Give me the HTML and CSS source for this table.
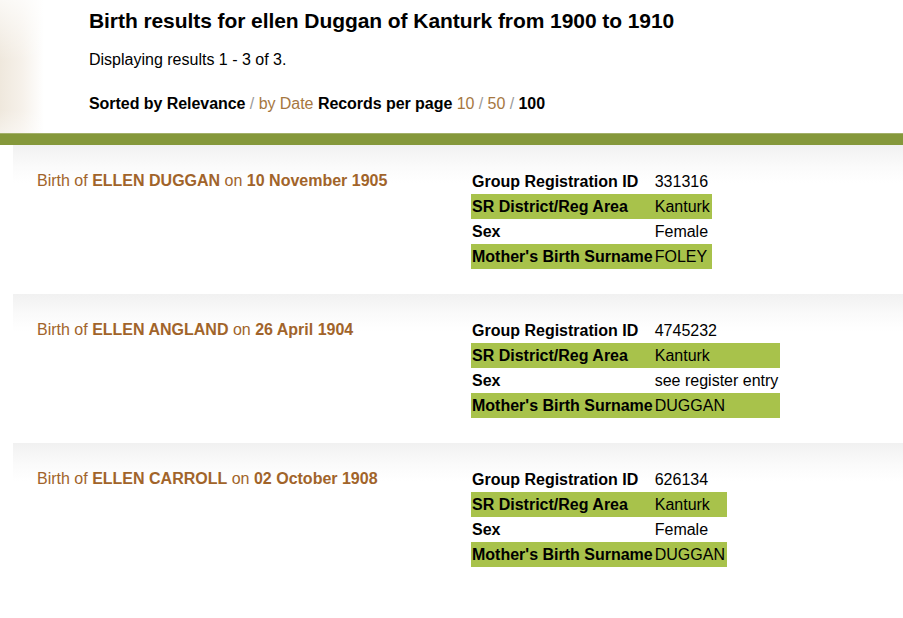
FILE: index.html
```html
<!DOCTYPE html>
<html>
<head>
<meta charset="utf-8">
<link rel="stylesheet" href="styles.css">
</head>
<body>
<div class="header">
  <h1 class="title">Birth results for ellen Duggan of Kanturk from 1900 to 1910</h1>
  <p class="count">Displaying results 1 - 3 of 3.</p>
  <p class="sort"><b>Sorted by Relevance</b> <span class="sep">/</span> <a class="lnk">by Date</a> <b>Records per page</b> <a class="lnk">10</a> <span class="sep">/</span> <a class="lnk">50</a> <span class="sep">/</span> <b>100</b></p>
</div>
<div class="bar"></div>
<div class="results">
  <div class="record">
    <div class="rtitle">Birth of <b>ELLEN DUGGAN</b> on <b>10 November 1905</b></div>
    <table class="details">
      <tr><th>Group Registration ID</th><td>331316</td></tr>
      <tr class="hl"><th>SR District/Reg Area</th><td>Kanturk</td></tr>
      <tr><th>Sex</th><td>Female</td></tr>
      <tr class="hl"><th>Mother's Birth Surname</th><td>FOLEY</td></tr>
    </table>
  </div>
  <div class="record">
    <div class="rtitle">Birth of <b>ELLEN ANGLAND</b> on <b>26 April 1904</b></div>
    <table class="details">
      <tr><th>Group Registration ID</th><td>4745232</td></tr>
      <tr class="hl"><th>SR District/Reg Area</th><td>Kanturk</td></tr>
      <tr><th>Sex</th><td>see register entry</td></tr>
      <tr class="hl"><th>Mother's Birth Surname</th><td>DUGGAN</td></tr>
    </table>
  </div>
  <div class="record">
    <div class="rtitle">Birth of <b>ELLEN CARROLL</b> on <b>02 October 1908</b></div>
    <table class="details">
      <tr><th>Group Registration ID</th><td>626134</td></tr>
      <tr class="hl"><th>SR District/Reg Area</th><td>Kanturk</td></tr>
      <tr><th>Sex</th><td>Female</td></tr>
      <tr class="hl"><th>Mother's Birth Surname</th><td>DUGGAN</td></tr>
    </table>
  </div>
</div>
</body>
</html>
```
FILE: styles.css
```css
html, body {
  margin: 0;
  padding: 0;
  background: #fff;
}
body {
  font-family: "Liberation Sans", Arial, sans-serif;
  color: #000;
  width: 903px;
  overflow: hidden;
}
.header {
  height: 133px;
  box-sizing: border-box;
  padding: 9px 0 0 89px;
  background:
    linear-gradient(to bottom, rgba(255,255,255,0.7), rgba(255,255,255,0) 60px, rgba(255,255,255,0) 110px, rgba(255,255,255,0.4) 133px),
    linear-gradient(to right, #efe8dd 0px, #f6f1ea 22px, #ffffff 44px);
}
.title {
  margin: 0;
  font-size: 21px;
  font-weight: bold;
  line-height: 24px;
  letter-spacing: -0.07px;
}
.count {
  margin: 17px 0 0;
  font-size: 16px;
  line-height: 20px;
}
.sort {
  margin: 24px 0 0;
  font-size: 16px;
  line-height: 20px;
  letter-spacing: -0.05px;
}
.sort b {
  font-weight: bold;
}
.sep {
  color: #9a9a9a;
}
.lnk {
  color: #a6773f;
}
.bar {
  height: 12px;
  background: #85983b;
  border-top: 1px solid #a3b06a;
  box-sizing: border-box;
}
.results {
  padding-left: 13px;
}
.record {
  height: 149px;
  box-sizing: border-box;
  display: flex;
  padding: 24px 0 0 24px;
  background: linear-gradient(to bottom, #f1f1f1 0px, #fafafa 20px, #ffffff 38px);
}
.rtitle {
  width: 434px;
  flex: none;
  color: #a1642a;
  font-size: 16px;
  line-height: 24px;
}
.rtitle b {
  font-weight: bold;
}
.details {
  border-collapse: collapse;
  font-size: 16px;
  align-self: flex-start;
}
.details th,
.details td {
  height: 25px;
  padding: 0 2px 0 0;
  text-align: left;
  vertical-align: middle;
  white-space: nowrap;
}
.details th {
  font-weight: bold;
  padding: 0 2px 0 1px;
}
.details tr.hl th,
.details tr.hl td {
  background: #a8c24b;
}
```
